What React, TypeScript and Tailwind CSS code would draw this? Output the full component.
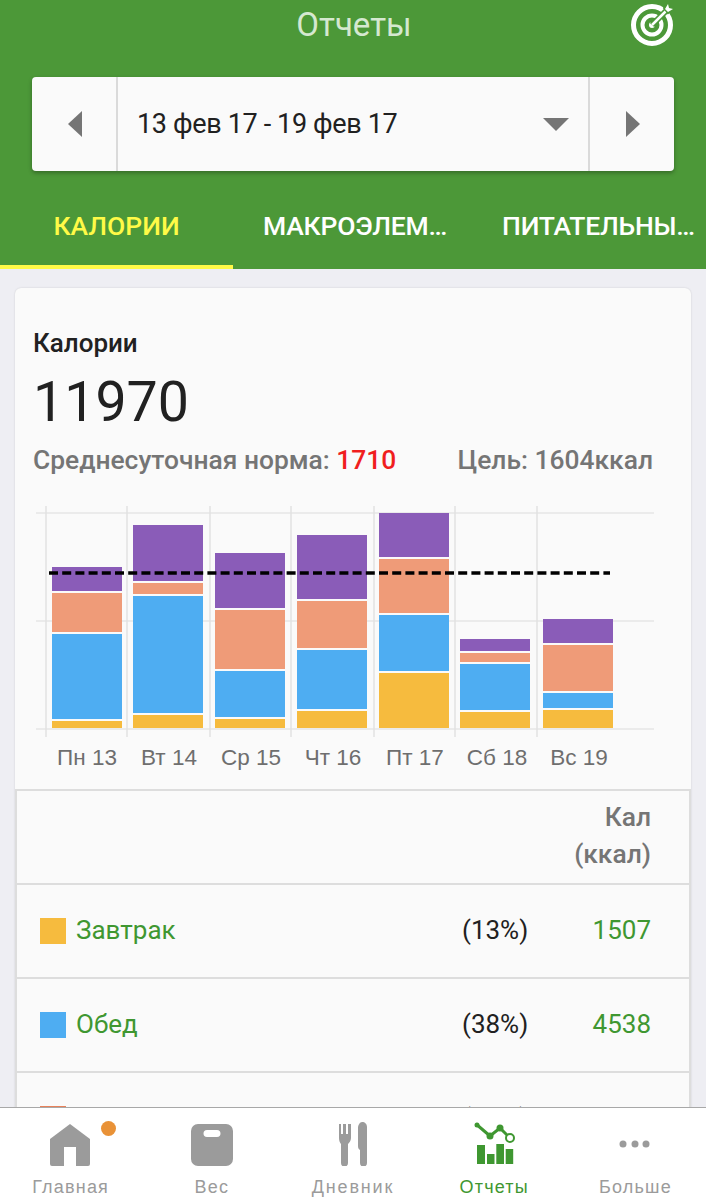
const days = ['Пн 13', 'Вт 14', 'Ср 15', 'Чт 16', 'Пт 17', 'Сб 18', 'Вс 19'];

const COLORS = { purple: '#8A5CB8', orange: '#EF9B78', blue: '#4EADF2', yellow: '#F6BB3E' };

// y coordinates measured off the chart: [top, bottom] of each stacked segment
const bars = [
  { x: 52, purple: [567, 591], orange: [593, 632], blue: [634, 719], yellow: [721, 728] },
  { x: 133, purple: [525, 581], orange: [583, 594], blue: [596, 713], yellow: [715, 728] },
  { x: 215, purple: [553, 608], orange: [610, 669], blue: [671, 717], yellow: [719, 728] },
  { x: 297, purple: [535, 599], orange: [601, 648], blue: [650, 709], yellow: [711, 728] },
  { x: 379, purple: [513, 557], orange: [559, 613], blue: [615, 671], yellow: [673, 728] },
  { x: 460, purple: [639, 651], orange: [653, 662], blue: [664, 710], yellow: [712, 728] },
  { x: 543, purple: [619, 643], orange: [645, 691], blue: [693, 708], yellow: [710, 728] },
];

const meals = [
  { name: 'Завтрак', color: 'bg-[#F6BB3E]', percent: '(13%)', value: '1507' },
  { name: 'Обед', color: 'bg-[#4EADF2]', percent: '(38%)', value: '4538' },
  { name: 'Ужин', color: 'bg-[#E8825A]', percent: '(26%)', value: '3112' },
];

const Chart = () => (
  <svg width="676" height="240" viewBox="15 503 676 240" className="block">
    {[513, 621, 729].map((y) => (
      <line key={y} x1="36" x2="654" y1={y} y2={y} stroke="#E6E6E6" strokeWidth="1.5" />
    ))}
    {[46, 127, 210, 291, 374, 455, 537].map((x) => (
      <line key={x} x1={x} x2={x} y1="506" y2="737" stroke="#E2E2E2" strokeWidth="1.5" />
    ))}
    {bars.map((bar) =>
      (['purple', 'orange', 'blue', 'yellow'] as const).map((key) => (
        <rect
          key={key}
          x={bar.x}
          y={bar[key][0]}
          width="70"
          height={bar[key][1] - bar[key][0]}
          fill={COLORS[key]}
        />
      ))
    )}
    <line x1="49" x2="610" y1="573" y2="573" stroke="#000" strokeWidth="3.5" strokeDasharray="9 4.2" />
  </svg>
);

const TargetIcon = () => (
  <svg width="46" height="46" viewBox="0 0 46 46" className="block">
    <circle cx="22" cy="24" r="18.5" fill="none" stroke="#fff" strokeWidth="5" />
    <circle cx="22" cy="24" r="9.5" fill="none" stroke="#fff" strokeWidth="4" />
    <circle cx="22" cy="24" r="3" fill="#fff" />
    <path d="M22 24 L38 8" stroke="#4C9838" strokeWidth="6" />
    <path d="M22 24 L37 9" stroke="#fff" strokeWidth="2.5" />
    <path d="M34 7 L38 1 L39 6 L44 7 L38 12 Z" fill="#4C9838" stroke="#4C9838" strokeWidth="2" />
    <path d="M35 8 L38 3 L39 7 L43 8 L38 11 Z" fill="#fff" />
  </svg>
);

const HomeIcon = () => (
  <svg width="42" height="42" viewBox="0 0 42 42" className="-ml-[2px] mt-[1px]">
    <path
      d="M21 0 L41 15 V40 a2 2 0 0 1 -2 2 H27 V23 H15 V42 H3 a2 2 0 0 1 -2 -2 V15 Z"
      fill="#9B9B9B"
    />
  </svg>
);

const ScaleIcon = () => (
  <svg width="42" height="42" viewBox="0 0 42 42" className="mt-[1px]">
    <path
      fillRule="evenodd"
      d="M7 0 H35 a7 7 0 0 1 7 7 V35 a7 7 0 0 1 -7 7 H7 a7 7 0 0 1 -7 -7 V7 a7 7 0 0 1 7 -7 Z M16 6 a3 3 0 0 0 0 7 H26 a3 3 0 0 0 0 -7 Z"
      fill="#9B9B9B"
    />
  </svg>
);

const DiaryIcon = () => (
  <svg width="30" height="44" viewBox="0 0 30 44">
    <path
      d="M1 2 h2 v10 h2 V2 h3 v10 h2 V2 h3 v14 c0 3 -2 5 -3 6 V41 a3 3 0 0 1 -7 0 V22 c-1 -1 -2 -3 -2 -6 Z"
      fill="#9B9B9B"
    />
    <path
      d="M24 0 c3 0 5 2 5 5 V41 a3.5 3.5 0 0 1 -7 0 V28 c-2 -1 -2 -3 -2 -5 V6 c0 -3 2 -6 4 -6 Z"
      fill="#9B9B9B"
    />
  </svg>
);

const ReportsIcon = () => (
  <svg width="44" height="44" viewBox="0 0 44 44">
    <rect x="5" y="23" width="8" height="19" fill="#3F9731" />
    <rect x="15" y="32" width="7.5" height="10" fill="#3F9731" />
    <rect x="24.3" y="22" width="7.7" height="20" fill="#3F9731" />
    <rect x="33.7" y="27" width="7.5" height="15" fill="#3F9731" />
    <path d="M4 2 L18 14 L28 6 L38 16" fill="none" stroke="#3F9731" strokeWidth="3" />
    <circle cx="5" cy="3" r="2.5" fill="#3F9731" />
    <circle cx="18" cy="14" r="3.5" fill="#3F9731" />
    <circle cx="28" cy="6" r="3.5" fill="#3F9731" />
    <circle cx="38" cy="16" r="4" fill="#fff" stroke="#3F9731" strokeWidth="2" />
  </svg>
);

const MoreIcon = () => (
  <svg width="32" height="8" viewBox="0 0 32 8">
    <circle cx="4" cy="4" r="3.5" fill="#9B9B9B" />
    <circle cx="16" cy="4" r="3.5" fill="#9B9B9B" />
    <circle cx="27" cy="4" r="3.5" fill="#9B9B9B" />
  </svg>
);

const NavItem = ({
  label,
  active,
  wide,
  children,
}: {
  label: string;
  active?: boolean;
  wide?: boolean;
  children: React.ReactNode;
}) => (
  <div className="flex flex-col items-center">
    <div className="h-[44px] flex items-center justify-center relative">{children}</div>
    <span
      className={`mt-[10px] text-[18px] leading-[22px] ${wide ? 'tracking-[1.85px]' : 'tracking-[1.2px]'} ${
        active ? 'text-[#3F9731]' : 'text-[#9B9B9B]'
      }`}
    >
      {label}
    </span>
  </div>
);

const App = () => {
  return (
    <div className="w-[706px] h-[1200px] overflow-hidden flex flex-col bg-[#EEEEF3] font-['Roboto',sans-serif]">
      <header className="h-[269px] shrink-0 bg-[#4C9838] flex flex-col">
        <div className="h-[77px] px-[32px] pt-[2px] flex items-start justify-between">
          <div className="w-[46px]" />
          <h1 className="text-[33px] leading-[46px] text-[#D5E8D0]">Отчеты</h1>
          <div className="-mr-[2px] -mt-[1px]">
            <TargetIcon />
          </div>
        </div>

        <div className="mx-[32px] h-[94px] rounded-[4px] bg-[#FAFAFA] shadow-[0_2px_4px_rgba(0,0,0,0.3)] flex">
          <div className="w-[86px] pl-[2px] flex items-center justify-center border-r-2 border-[#DADADA]">
            <svg width="15" height="26" viewBox="0 0 15 26">
              <path d="M14 0 V26 L0 13 Z" fill="#757575" />
            </svg>
          </div>
          <div className="flex-1 flex items-center justify-between pl-[19px] pr-[19px] border-r-2 border-[#DADADA]">
            <span className="text-[27px] tracking-[-0.35px] text-[#212121]">13 фев 17 - 19 фев 17</span>
            <svg width="26" height="13" viewBox="0 0 26 13">
              <path d="M0 0 H26 L13 13 Z" fill="#757575" />
            </svg>
          </div>
          <div className="w-[84px] flex items-center justify-center">
            <svg width="15" height="26" viewBox="0 0 15 26">
              <path d="M1 0 V26 L15 13 Z" fill="#757575" />
            </svg>
          </div>
        </div>

        <nav className="flex-1 flex overflow-hidden">
          <div className="w-[233px] shrink-0 border-b-4 border-[#FFFA47] flex items-center justify-center pt-[16px] text-[26.5px] font-medium text-[#FFFA47]">
            КАЛОРИИ
          </div>
          <div className="w-[244px] shrink-0 border-b-4 border-transparent flex items-center justify-center pt-[16px] text-[26.5px] font-medium tracking-[-0.2px] text-white">
            МАКРОЭЛЕМ…
          </div>
          <div className="w-[243px] shrink-0 border-b-4 border-transparent flex items-center justify-center pt-[16px] text-[26.5px] font-medium tracking-[-0.2px] text-white">
            ПИТАТЕЛЬНЫ…
          </div>
        </nav>
      </header>

      <main className="flex-1 min-h-0 overflow-hidden pt-[19px] px-[15px]">
        <section className="rounded-t-[6px] bg-[#FAFAFA] shadow-[0_0_2px_rgba(0,0,0,0.15)]">
          <div className="px-[18px] pt-[38px]">
            <h2 className="text-[26px] leading-[34px] font-medium text-[#212121]">Калории</h2>
            <div className="mt-[9px] text-[55.5px] leading-[68px] text-[#212121]">11970</div>
            <div className="mt-[6px] pr-[20px] flex justify-between text-[26.4px] leading-[34px] font-medium text-[#757575]">
              <span>
                Среднесуточная норма: <span className="text-[#F01E1E]">1710</span>
              </span>
              <span>Цель: 1604ккал</span>
            </div>
          </div>

          <div className="mt-[26px]">
            <Chart />
          </div>
          <div className="flex pl-[31px] pt-[1px] h-[28px] font-['Liberation_Sans',sans-serif] text-[22.5px] leading-[28px] text-[#6E6E6E]">
            {days.map((day) => (
              <div key={day} className="w-[82px] text-center">
                {day}
              </div>
            ))}
          </div>

          <div className="mt-[18px] border-x-2 border-t-2 border-[#DDDDDD]">
            <div className="h-[94px] pr-[38px] pb-[3px] flex flex-col items-end justify-center gap-[3px] border-b-2 border-[#DDDDDD] text-[26.4px] leading-[34px] font-medium text-[#757575]">
              <span>Кал</span>
              <span>(ккал)</span>
            </div>
            {meals.map((meal) => (
              <div
                key={meal.name}
                className="h-[94px] pl-[23px] pr-[38px] flex items-center border-b-2 border-[#DDDDDD] text-[26px]"
              >
                <span className={`w-[26px] h-[26px] ${meal.color}`} />
                <span className="ml-[10px] mb-[2px] flex-1 text-[#3F9731]">{meal.name}</span>
                <span className="w-[66px] mb-[2px] text-right text-[#212121]">{meal.percent}</span>
                <span className="w-[123px] mb-[2px] text-right text-[#3F9731]">{meal.value}</span>
              </div>
            ))}
          </div>
        </section>
      </main>

      <footer className="h-[93px] shrink-0 bg-white border-t border-[#A8A8A8] pt-[14px] grid grid-cols-5 font-['Liberation_Sans',sans-serif]">
        <NavItem label="Главная">
          <HomeIcon />
          <span className="absolute left-[50px] top-[-1px] w-[15px] h-[15px] rounded-full bg-[#E99237]" />
        </NavItem>
        <NavItem label="Вес">
          <ScaleIcon />
        </NavItem>
        <NavItem label="Дневник" wide>
          <DiaryIcon />
        </NavItem>
        <NavItem label="Отчеты" active>
          <ReportsIcon />
        </NavItem>
        <NavItem label="Больше">
          <MoreIcon />
        </NavItem>
      </footer>
    </div>
  );
};

export default App;
